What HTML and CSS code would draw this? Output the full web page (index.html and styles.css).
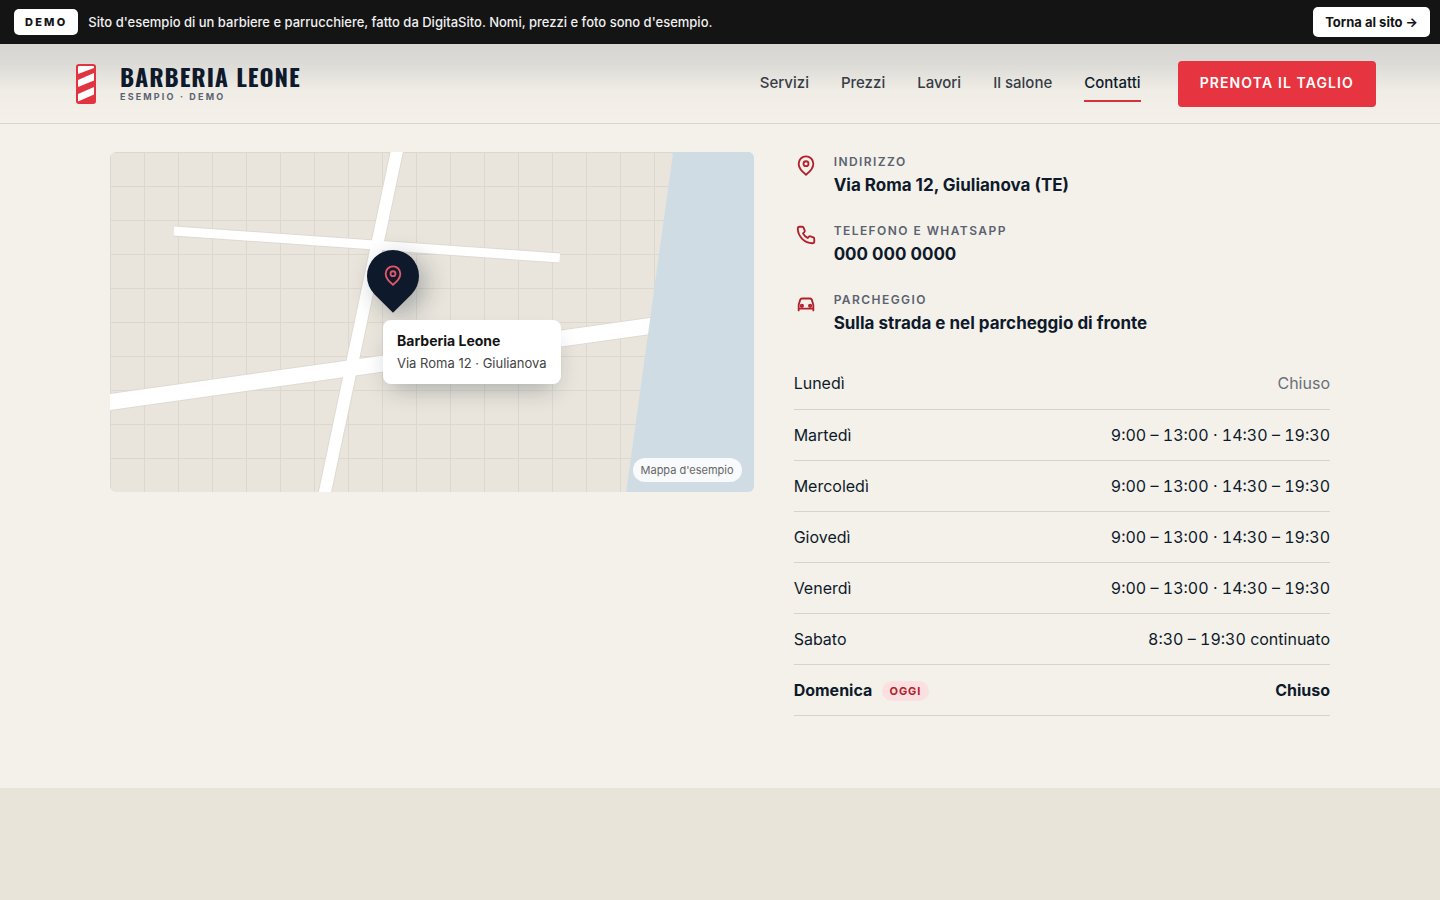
FILE: index.html
```
<!DOCTYPE html>
<html lang="it">
<head>
    <meta charset="UTF-8">
    <meta name="viewport" content="width=device-width, initial-scale=1.0">
    <title>Barberia Leone - Contatti</title>
    <link rel="stylesheet" href="styles.css">
</head>
<body>
    <div class="demo-bar">
        <span class="demo-tag">DEMO</span>
        <p class="demo-text">Sito d'esempio di un barbiere e parrucchiere, fatto da DigitaSito. Nomi, prezzi e foto sono d'esempio.</p>
        <a class="demo-back" href="#">Torna al sito →</a>
    </div>

    <header class="header">
        <a class="logo" href="#">
            <svg class="logo-mark" viewBox="0 0 44 44" aria-hidden="true">
                <rect x="12" y="2" width="20" height="40" rx="3" fill="#e23440"/>
                <path d="M14 5q0-1 1-1h14q1 0 1 1v1L14 12z" fill="#fff"/>
                <path d="M14 18L30 11v7.500L14 25z" fill="#fff"/>
                <path d="M14 32L30 25v7.500L14 39.500z" fill="#fff"/>
            </svg>
            <span class="logo-text">
                <span class="logo-name">BARBERIA LEONE</span>
                <span class="logo-sub">ESEMPIO · DEMO</span>
            </span>
        </a>
        <nav class="nav">
            <a href="#servizi">Servizi</a>
            <a href="#prezzi">Prezzi</a>
            <a href="#lavori">Lavori</a>
            <a href="#salone">Il salone</a>
            <a class="active" href="#contatti">Contatti</a>
        </nav>
        <a class="btn" href="#prenota">PRENOTA IL TAGLIO</a>
    </header>

    <main class="section" id="contatti">
        <div class="contact-grid">
            <div class="map">
                <svg class="map-roads" viewBox="0 0 644 340" preserveAspectRatio="none" aria-hidden="true">
                    <g stroke="#dedad1">
                        <path d="M-10 251.400L644 159.500" stroke-width="18"/>
                        <path d="M289 -10L213 350" stroke-width="14"/>
                        <path d="M64 79L450 106" stroke-width="11"/>
                    </g>
                    <g stroke="#fff">
                        <path d="M-10 251.400L644 159.500" stroke-width="16"/>
                        <path d="M289 -10L213 350" stroke-width="12"/>
                        <path d="M64 79L450 106" stroke-width="9"/>
                    </g>
                    <path d="M563.500 0H645V340H516.500z" fill="#cfdce4"/>
                </svg>
                <div class="map-pin">
                    <svg viewBox="0 0 24 24" aria-hidden="true">
                        <path d="M12 21.500s-8-6.300-8-12a8 8 0 0 1 16 0c0 5.700-8 12-8 12z"/>
                        <circle cx="12" cy="9.500" r="2.700"/>
                    </svg>
                </div>
                <div class="map-card">
                    <strong>Barberia Leone</strong>
                    <span>Via Roma 12 · Giulianova</span>
                </div>
                <span class="map-note">Mappa d'esempio</span>
            </div>

            <div class="info">
                <ul class="info-list">
                    <li>
                        <svg class="icon" viewBox="0 0 24 24" aria-hidden="true">
                            <path d="M12 21.500s-8-6.300-8-12a8 8 0 0 1 16 0c0 5.700-8 12-8 12z"/>
                            <circle cx="12" cy="9.500" r="2.700"/>
                        </svg>
                        <div>
                            <span class="label">INDIRIZZO</span>
                            <span class="value">Via Roma 12, Giulianova (TE)</span>
                        </div>
                    </li>
                    <li>
                        <svg class="icon" viewBox="0 0 24 24" aria-hidden="true">
                            <path d="M5 3h3a1.500 1.500 0 0 1 1.400 1l1.200 3.200a1.500 1.500 0 0 1-.4 1.600L8.700 10.200a13 13 0 0 0 5.100 5.100l1.400-1.500a1.500 1.500 0 0 1 1.600-.4l3.200 1.200a1.500 1.500 0 0 1 1 1.400v3a2 2 0 0 1-2 2A16.500 16.500 0 0 1 3 5a2 2 0 0 1 2-2z"/>
                        </svg>
                        <div>
                            <span class="label">TELEFONO E WHATSAPP</span>
                            <span class="value">000 000 0000</span>
                        </div>
                    </li>
                    <li>
                        <svg class="icon" viewBox="0 0 24 24" aria-hidden="true">
                            <path d="M4 19v-6l1.600-5.500A2.200 2.200 0 0 1 7.700 6h8.600a2.200 2.200 0 0 1 2.100 1.500L20 13v6M4 17h16"/>
                            <circle cx="7.500" cy="14" r="1.300"/>
                            <circle cx="16.500" cy="14" r="1.300"/>
                        </svg>
                        <div>
                            <span class="label">PARCHEGGIO</span>
                            <span class="value">Sulla strada e nel parcheggio di fronte</span>
                        </div>
                    </li>
                </ul>

                <table class="hours">
                    <tbody>
                        <tr class="closed"><th scope="row">Lunedì</th><td>Chiuso</td></tr>
                        <tr><th scope="row">Martedì</th><td>9:00 – 13:00 · 14:30 – 19:30</td></tr>
                        <tr><th scope="row">Mercoledì</th><td>9:00 – 13:00 · 14:30 – 19:30</td></tr>
                        <tr><th scope="row">Giovedì</th><td>9:00 – 13:00 · 14:30 – 19:30</td></tr>
                        <tr><th scope="row">Venerdì</th><td>9:00 – 13:00 · 14:30 – 19:30</td></tr>
                        <tr><th scope="row">Sabato</th><td>8:30 – 19:30 continuato</td></tr>
                        <tr class="today"><th scope="row">Domenica <span class="today-tag">OGGI</span></th><td>Chiuso</td></tr>
                    </tbody>
                </table>
            </div>
        </div>
    </main>
</body>
</html>
```
FILE: styles.css
```
* {
    box-sizing: border-box;
}
body {
    margin: 0;
    background: #e8e4d9;
    color: #0e1a2b;
    font-family: Inter, "Liberation Sans", sans-serif;
    font-size: 16px;
    line-height: 24px;
}
a {
    color: inherit;
    text-decoration: none;
}

/* demo bar */
.demo-bar {
    display: flex;
    align-items: center;
    gap: 10px;
    height: 44px;
    padding: 0 10px 0 14px;
    background: #141414;
    color: #f0f0f0;
    font-size: 13px;
    font-weight: 500;
}
.demo-tag {
    padding: 1px 11px;
    border-radius: 5px;
    background: #fff;
    color: #141414;
    font-size: 11px;
    font-weight: 800;
    letter-spacing: 0.2em;
}
.demo-text {
    margin: 0;
}
.demo-back {
    margin-left: auto;
    padding: 3px 12px;
    border-radius: 5px;
    background: #fff;
    color: #141414;
    font-weight: 700;
}

/* header */
.header {
    display: flex;
    align-items: center;
    height: 80px;
    padding: 0 64px;
    border-bottom: 1px solid #d8d5cd;
    background: linear-gradient(#d7d6d3, #dcdad6 24%, #f0ede6 60%, #f5f0ea);
}
.logo {
    display: flex;
    align-items: center;
    gap: 12px;
}
.logo-mark {
    width: 44px;
    height: 44px;
}
.logo-text {
    display: flex;
    flex-direction: column;
}
.logo-name {
    font-family: Oswald, "Liberation Sans Narrow", sans-serif;
    font-size: 24px;
    font-weight: 700;
    line-height: 26px;
    letter-spacing: 0.04em;
}
.logo-sub {
    color: #5b6270;
    font-size: 9px;
    font-weight: 700;
    line-height: 16px;
    letter-spacing: 0.24em;
}
.nav {
    display: flex;
    gap: 32px;
    margin-left: auto;
    color: #363c46;
    font-size: 15px;
    font-weight: 500;
}
.nav a {
    padding: 6px 0 5px;
    border-bottom: 2px solid transparent;
}
.nav .active {
    border-color: #d2323e;
    color: #0e1a2b;
}
.btn {
    margin-left: 37px;
    padding: 10px 22px 12px;
    border-radius: 4px;
    background: #e63540;
    color: #fff;
    font-size: 14px;
    font-weight: 600;
    letter-spacing: 0.08em;
}

/* contacts */
.section {
    padding: 28px 64px 72px;
    background: #f4f1ea;
}
.contact-grid {
    display: grid;
    grid-template-columns: 1.2fr 1fr;
    gap: 40px;
    max-width: 1220px;
    margin: 0 auto;
    align-items: start;
}
.map {
    position: relative;
    height: 340px;
    border-radius: 6px;
    overflow: hidden;
    background-color: #e9e5dc;
    background-image:
        linear-gradient(#dcd8cf 1px, transparent 1px),
        linear-gradient(90deg, #dcd8cf 1px, transparent 1px);
    background-size: 34px 34px;
}
.map-roads {
    display: block;
    width: 100%;
    height: 100%;
}
.map-pin {
    position: absolute;
    left: 257px;
    top: 98px;
    display: grid;
    place-items: center;
    width: 52px;
    height: 52px;
    border-radius: 50% 50% 50% 0;
    background: #0e1a2b;
    box-shadow: 0 10px 24px rgba(14, 26, 43, 0.3);
    transform: rotate(-45deg);
}
.map-pin svg {
    width: 22px;
    height: 22px;
    fill: none;
    stroke: #e0566a;
    stroke-width: 2;
    transform: rotate(45deg);
}
.map-card {
    position: absolute;
    left: 273px;
    top: 168px;
    display: flex;
    flex-direction: column;
    padding: 10px 14px;
    border-radius: 8px;
    background: #fff;
    box-shadow: 0 12px 24px -8px rgba(14, 26, 43, 0.3);
    color: #444;
    font-size: 13px;
    line-height: 22px;
}
.map-card strong {
    color: #141414;
    font-size: 14px;
}
.map-note {
    position: absolute;
    right: 12px;
    bottom: 10px;
    padding: 0 8px;
    border-radius: 12px;
    background: rgba(255, 255, 255, 0.85);
    color: #666;
    font-size: 11px;
}
.info-list {
    display: flex;
    flex-direction: column;
    gap: 23px;
    margin: 0 0 22px;
    padding: 0;
    list-style: none;
}
.info-list li {
    display: flex;
    gap: 16px;
}
.icon {
    width: 24px;
    height: 24px;
    padding: 1px;
    margin-top: 2px;
    fill: none;
    stroke: #b3202c;
    stroke-width: 2;
    stroke-linecap: round;
    stroke-linejoin: round;
}
.label {
    display: block;
    color: #5b6270;
    font-size: 12px;
    font-weight: 600;
    line-height: 20px;
    letter-spacing: 0.12em;
}
.value {
    display: block;
    font-size: 17px;
    font-weight: 700;
    line-height: 26px;
}
.hours {
    width: 100%;
    border-collapse: collapse;
    font-variant-numeric: tabular-nums;
}
.hours th,
.hours td {
    height: 51px;
    padding: 0;
    border-bottom: 1px solid #d6d3cb;
    font-weight: 400;
    text-align: left;
}
.hours td {
    text-align: right;
}
.hours .closed td {
    color: #6a7079;
}
.hours .today th,
.hours .today td {
    font-weight: 700;
}
.today-tag {
    display: inline-block;
    margin-left: 5px;
    padding: 0 8px;
    border-radius: 10px;
    background: #fbe0e1;
    color: #b3202c;
    font-size: 11px;
    line-height: 20px;
    letter-spacing: 0.08em;
    vertical-align: middle;
}
```
